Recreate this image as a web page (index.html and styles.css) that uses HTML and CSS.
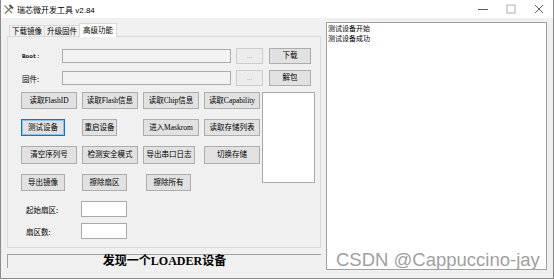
FILE: index.html
```html
<!DOCTYPE html>
<html>
  <head>
    <meta charset="UTF-8" />
    <title>瑞芯微开发工具 v2.84</title>
    <link rel="stylesheet" href="styles.css">
  </head>
  <body>
    <div class="window">
      <div class="titlebar">
        <svg class="app-icon" viewBox="0 0 11 11" width="11" height="11">
          <path d="M2 9.5 L8.5 3" stroke="#9a7a4a" stroke-width="1.4" />
          <path d="M6.5 1 L10 4.5" stroke="#505050" stroke-width="2" />
          <path d="M1.5 1.5 L9 9" stroke="#7a7a7a" stroke-width="1.1" />
        </svg>
        <span class="title">瑞芯微开发工具 v2.84</span>
        <div class="controls">
          <span class="ctl">
            <svg viewBox="0 0 10 10" width="10" height="10"><path d="M0 5.5 H10" stroke="#333" stroke-width="0.8" /></svg>
          </span>
          <span class="ctl">
            <svg viewBox="0 0 10 10" width="10" height="10"><rect x="1" y="1" width="8" height="8" fill="none" stroke="#999" stroke-width="0.8" /></svg>
          </span>
          <span class="ctl">
            <svg viewBox="0 0 10 10" width="10" height="10"><path d="M1 1 L9 9 M9 1 L1 9" stroke="#333" stroke-width="0.8" /></svg>
          </span>
        </div>
      </div>

      <div class="main">
        <div class="left">
          <div class="tabs">
            <div class="tab">下载镜像</div>
            <div class="tab">升级固件</div>
            <div class="tab active">高级功能</div>
          </div>

          <div class="panel">
            <div class="file-row">
              <label class="lbl mono">Boot:</label>
              <div class="path"></div>
              <button class="btn browse" disabled>...</button>
              <button class="btn action">下载</button>
            </div>
            <div class="file-row">
              <label class="lbl">固件:</label>
              <div class="path"></div>
              <button class="btn browse" disabled>...</button>
              <button class="btn action">解包</button>
            </div>

            <div class="cmd-grid">
              <button class="btn">读取FlashID</button>
              <button class="btn">读取Flash信息</button>
              <button class="btn">读取Chip信息</button>
              <button class="btn">读取Capability</button>

              <button class="btn narrow focused">测试设备</button>
              <button class="btn tiny">重启设备</button>
              <button class="btn">进入Maskrom</button>
              <button class="btn">读取存储列表</button>

              <button class="btn">清空序列号</button>
              <button class="btn">检测安全模式</button>
              <button class="btn w52">导出串口日志</button>
              <button class="btn">切换存储</button>

              <button class="btn narrow">导出镜像</button>
              <button class="btn mid">擦除扇区</button>
              <button class="btn mid shift">擦除所有</button>

              <div class="listbox"></div>
            </div>

            <div class="sector-row first">
              <label class="sector-lbl">起始扇区:</label>
              <div class="num"></div>
            </div>
            <div class="sector-row">
              <label class="sector-lbl">扇区数:</label>
              <div class="num"></div>
            </div>
          </div>

          <div class="status">发现一个LOADER设备</div>
        </div>

        <div class="log">
          <div class="log-line">测试设备开始</div>
          <div class="log-line">测试设备成功</div>
          <span class="watermark">CSDN @Cappuccino-jay</span>
        </div>
      </div>
    </div>
  </body>
</html>
```

FILE: styles.css
```css
* {
  box-sizing: border-box;
}

body {
  margin: 0;
  background: #ffffff;
  font-family: "Noto Sans CJK SC", sans-serif;
}

.window {
  width: 554px;
  height: 279px;
  border: 1px solid #8a8a8a;
  border-top: none;
  background: #f0f0f0;
  display: flex;
  flex-direction: column;
}

/* title bar */
.titlebar {
  height: 18px;
  background: #ffffff;
  display: flex;
  align-items: center;
  padding-left: 2px;
}
.app-icon {
  display: block;
}
.title {
  margin-left: 3px;
  font-family: "Liberation Sans", "Noto Sans CJK SC", sans-serif;
  font-size: 8px;
  color: #000;
}
.controls {
  margin-left: auto;
  display: flex;
}
.ctl {
  width: 28px;
  height: 18px;
  display: flex;
  align-items: center;
  justify-content: center;
}

/* body */
.main {
  flex: 1;
  display: flex;
  gap: 5px;
  padding-left: 6px;
}
.left {
  width: 314px;
  margin-top: 5px;
  display: flex;
  flex-direction: column;
}

.tabs {
  display: flex;
  align-items: flex-end;
  height: 13px;
  padding-left: 2px;
  position: relative;
  z-index: 1;
}
.tab {
  height: 11px;
  padding: 0 2px;
  font-size: 7.5px;
  line-height: 10px;
  border: 1px solid #d9d9d9;
  border-bottom: none;
  background: #f0f0f0;
  color: #000;
  margin-right: -1px;
}
.tab.active {
  height: 14px;
  margin-bottom: -1px;
  padding: 1px 3px 0;
  background: #ffffff;
}

.panel {
  height: 212px;
  border: 1px solid #d9d9d9;
  background: #f0f0f0;
  padding: 11px 0 0 13px;
}

.file-row {
  display: flex;
  align-items: center;
  height: 16px;
  margin-bottom: 6px;
}
.lbl {
  width: 41px;
  padding-left: 1px;
  font-size: 7.5px;
  color: #000;
}
.lbl.mono {
  font-family: "Liberation Mono", monospace;
  font-size: 6px;
  font-weight: bold;
}
.path {
  width: 169px;
  height: 14px;
  border: 1px solid #ababab;
  background: #f2f2f2;
}

.btn {
  height: 17px;
  padding: 0;
  border: 1px solid #adadad;
  background: #e1e1e1;
  color: #000;
  font-family: "Liberation Serif", "Noto Sans CJK SC", serif;
  font-size: 7.5px;
  line-height: 1;
  white-space: nowrap;
  width: 56px;
}
.file-row .btn {
  height: 16px;
}
.btn.browse {
  width: 27px;
  margin-left: 5px;
  background: #ececec;
  border-color: #cccccc;
  color: #a0a0a0;
}
.btn.action {
  width: 42px;
  margin-left: 6px;
}
.btn.narrow {
  width: 44px;
}
.btn.tiny {
  width: 35px;
}
.btn.mid {
  width: 45px;
}
.btn.w52 {
  width: 52px;
}
.btn.shift {
  margin-left: 3px;
}
.btn.focused {
  border-color: #0078d7;
  box-shadow: inset 0 0 0 1px #8cc2ee;
}

.cmd-grid {
  display: grid;
  grid-template-columns: repeat(4, 56px) 53px;
  grid-template-rows: 17px 17px 18px 17px;
  column-gap: 5px;
  row-gap: 10px;
  margin-top: 2px;
  justify-items: start;
}
.cmd-grid .btn {
  align-self: stretch;
  height: auto;
}
.listbox {
  grid-column: 5;
  grid-row: 1 / 5;
  align-self: start;
  width: 53px;
  height: 91px;
  margin-left: -3px;
  background: #ffffff;
  border: 1px solid #a9a9a9;
}

.sector-row {
  display: flex;
  align-items: center;
  height: 16px;
  margin-top: 6px;
}
.sector-row.first {
  margin-top: 10px;
}
.sector-lbl {
  width: 60px;
  padding-left: 5px;
  font-size: 7.5px;
  color: #000;
}
.num {
  width: 46px;
  height: 16px;
  border: 1px solid #a9a9a9;
  background: #ffffff;
}

.status {
  margin-top: 6px;
  height: 14px;
  border-top: 1px solid #a0a0a0;
  border-left: 1px solid #a0a0a0;
  text-align: center;
  font-family: "Liberation Serif", "Noto Sans CJK SC", serif;
  font-weight: bold;
  font-size: 12px;
  line-height: 12px;
  color: #000;
}

/* log box */
.log {
  position: relative;
  width: 221px;
  height: 248px;
  margin-top: 4px;
  border: 1px solid #a0a0a0;
  background: #ffffff;
  padding: 0 1px;
  overflow: hidden;
}
.log-line {
  font-size: 7px;
  line-height: 10px;
  color: #000;
}
.watermark {
  position: absolute;
  left: 9px;
  top: 228px;
  font-family: "Liberation Sans", sans-serif;
  font-size: 18.5px;
  line-height: 1;
  color: #a0a0a0;
  white-space: nowrap;
}
```
